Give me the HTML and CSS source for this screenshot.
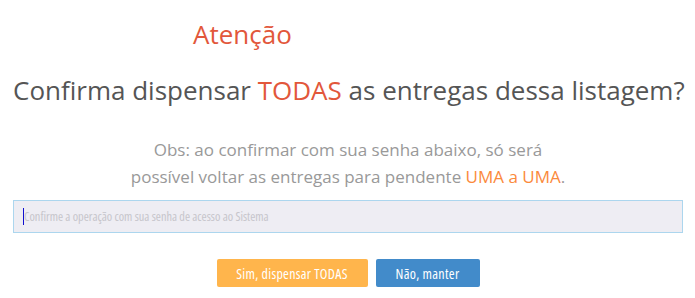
FILE: index.html
```html
<!DOCTYPE html>
<html lang="pt-BR">
<head>
<meta charset="utf-8">
<title>Atenção</title>
<link rel="stylesheet" href="styles.css">
</head>
<body>
<div class="dialog">
  <h2 class="title">Atenção</h2>
  <p class="question">Confirma dispensar <span class="hl">TODAS</span> as entregas dessa listagem?</p>
  <p class="obs">Obs: ao confirmar com sua senha abaixo, só será<br>possível voltar as entregas para pendente <span class="hl2">UMA a UMA</span>.</p>
  <div class="field"><span class="caret"></span><input class="pwd" type="password" placeholder="Confirme a operação com sua senha de acesso ao Sistema"></div>
  <div class="actions">
    <button class="btn btn-warn">Sim, dispensar TODAS</button>
    <button class="btn btn-primary">Não, manter</button>
  </div>
</div>
</body>
</html>
```
FILE: styles.css
```css
html, body {
  margin: 0;
  padding: 0;
  background: #fff;
}
body {
  font-family: "Open Sans", "Liberation Sans", sans-serif;
  width: 695px;
  height: 298px;
  overflow: hidden;
}
.dialog {
  padding: 18px 12px 0 13px;
}
.title {
  margin: 0 0 0 180px;
  font-size: 26px;
  font-weight: 400;
  line-height: 32px;
  color: #e2573b;
}
.question {
  margin: 24px 0 0;
  font-size: 26px;
  line-height: 32px;
  color: #555;
  text-align: center;
  white-space: nowrap;
}
.hl { color: #e2573b; }
.obs {
  margin: 30px 0 0;
  font-size: 17px;
  line-height: 27px;
  color: #999;
  text-align: center;
}
.hl2 { color: #fb8a3c; }
.field {
  position: relative;
  margin-top: 10px;
}
.pwd {
  display: block;
  box-sizing: border-box;
  width: 100%;
  height: 33px;
  margin: 0;
  padding: 0 10px;
  border: 1px solid #acd6ee;
  background: #eeedf3;
  font-family: "Open Sans", sans-serif;
  font-stretch: 75%;
  font-size: 12.3px;
  color: #555;
  outline: none;
}
.pwd::placeholder { color: #c6c5cb; }
.caret {
  position: absolute;
  left: 10px;
  top: 8px;
  width: 1px;
  height: 17px;
  background: #1010d0;
}
.actions {
  display: flex;
  justify-content: center;
  gap: 8px;
  margin-top: 26px;
}
.btn {
  height: 28px;
  border: 0;
  border-radius: 2px;
  color: #fff;
  font-family: "Open Sans", sans-serif;
  font-stretch: 75%;
  font-size: 14px;
  letter-spacing: 0.3px;
  padding: 0;
  white-space: nowrap;
}
.btn-warn { background: #ffb54c; width: 151px; }
.btn-primary { background: #428bca; width: 104px; }
```
